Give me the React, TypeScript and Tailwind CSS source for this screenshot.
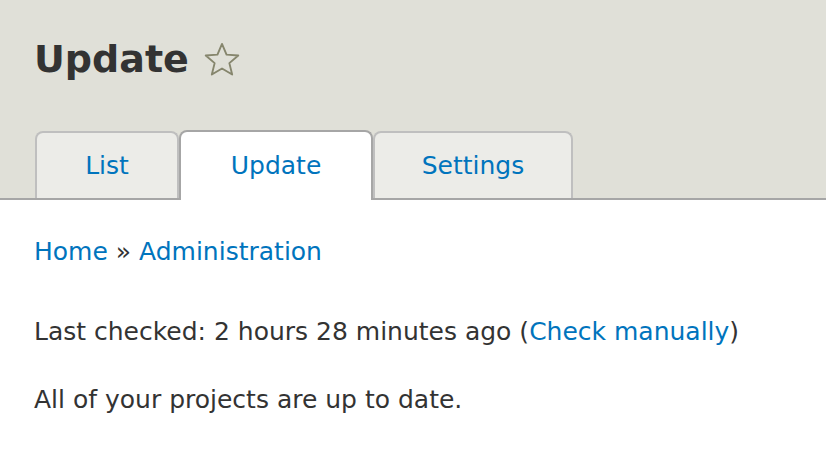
export default function App() {
  return (
    <div className="w-[826px] h-[452px] bg-white overflow-hidden" style={{ fontFamily: '"DejaVu Sans", Verdana, sans-serif' }}>
      <div className="bg-[#e0e0d8] border-b-2 border-[#a6a6a6] h-[200px] flex flex-col">
        <div className="pl-[34px] pt-[30px] flex items-center h-[92px] pb-[4px]">
          <h1 className="text-[38px] font-bold text-[#333] leading-none">Update</h1>
          <svg className="ml-[14px] mt-[2px]" width="38" height="36" viewBox="0 0 24 23">
            <path d="M12 1.2 L14.9 8.1 L22.4 8.6 L16.7 13.5 L18.5 20.8 L12 16.9 L5.5 20.8 L7.3 13.5 L1.6 8.6 L9.1 8.1 Z" fill="none" stroke="#86866d" strokeWidth="1.2" strokeLinejoin="round" />
          </svg>
        </div>
        <div className="flex items-end pl-[35px] mt-auto">
          <div className="w-[144px] h-[67px] bg-[#ecece8] border-2 border-b-0 border-[#bfbfbf] rounded-t-[8px] flex items-center justify-center text-[25px] text-[#0074bd]">List</div>
          <div className="w-[194px] h-[70px] bg-white border-2 border-b-0 border-[#a6a6a6] rounded-t-[8px] flex items-center justify-center text-[25px] text-[#0074bd] -mb-[2px]">Update</div>
          <div className="w-[200px] h-[67px] bg-[#ecece8] border-2 border-b-0 border-[#bfbfbf] rounded-t-[8px] flex items-center justify-center text-[25px] text-[#0074bd]">Settings</div>
        </div>
      </div>
      <div className="pl-[34px] text-[25px] text-[#333]">
        <div className="mt-[36px] leading-[32px]"><span className="text-[#0074bd]">Home</span> » <span className="text-[#0074bd]">Administration</span></div>
        <p className="mt-[48px] leading-[32px]">Last checked: 2 hours 28 minutes ago (<span className="text-[#0074bd]">Check manually</span>)</p>
        <p className="mt-[36px] leading-[32px]">All of your projects are up to date.</p>
      </div>
    </div>
  );
}
